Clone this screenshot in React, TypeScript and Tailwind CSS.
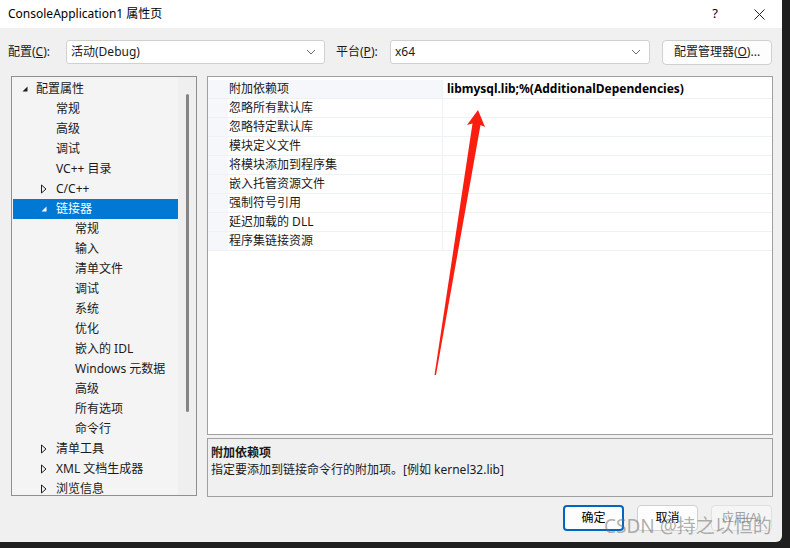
import React from "react";

const FONT = { fontFamily: '"Segoe UI", "Noto Sans", "Noto Sans CJK SC", sans-serif' };

type TreeItem = { label: string; level: number; arrow?: "open" | "closed"; selected?: boolean };

const tree: TreeItem[] = [
  { label: "配置属性", level: 0, arrow: "open" },
  { label: "常规", level: 1 },
  { label: "高级", level: 1 },
  { label: "调试", level: 1 },
  { label: "VC++ 目录", level: 1 },
  { label: "C/C++", level: 1, arrow: "closed" },
  { label: "链接器", level: 1, arrow: "open", selected: true },
  { label: "常规", level: 2 },
  { label: "输入", level: 2 },
  { label: "清单文件", level: 2 },
  { label: "调试", level: 2 },
  { label: "系统", level: 2 },
  { label: "优化", level: 2 },
  { label: "嵌入的 IDL", level: 2 },
  { label: "Windows 元数据", level: 2 },
  { label: "高级", level: 2 },
  { label: "所有选项", level: 2 },
  { label: "命令行", level: 2 },
  { label: "清单工具", level: 1, arrow: "closed" },
  { label: "XML 文档生成器", level: 1, arrow: "closed" },
  { label: "浏览信息", level: 1, arrow: "closed" },
];

const props = [
  "附加依赖项",
  "忽略所有默认库",
  "忽略特定默认库",
  "模块定义文件",
  "将模块添加到程序集",
  "嵌入托管资源文件",
  "强制符号引用",
  "延迟加载的 DLL",
  "程序集链接资源",
];

function Chevron() {
  return (
    <svg width="10" height="6" viewBox="0 0 10 6" className="shrink-0">
      <path d="M1 1 L5 5 L9 1" fill="none" stroke="#6b6b6b" strokeWidth="1" />
    </svg>
  );
}

function Arrow({ kind, selected }: { kind: "open" | "closed"; selected?: boolean }) {
  const c = selected ? "#ffffff" : "#1e1e1e";
  if (kind === "open")
    return (
      <svg width="8" height="8" viewBox="0 0 8 8">
        <path d="M6.5 1.5 L6.5 6.5 L1.5 6.5 Z" fill={c} />
      </svg>
    );
  return (
    <svg width="8" height="10" viewBox="0 0 8 10">
      <path d="M1.5 1 L6 5 L1.5 9 Z" fill="none" stroke={c} strokeWidth="1" />
    </svg>
  );
}

export default function App() {
  return (
    <div className="w-[790px] h-[548px] bg-[#1f1f1f] relative overflow-hidden text-[12px] text-[#1a1a1a]" style={FONT}>
      <div className="w-[782px] h-[542px] bg-[#f0f0f0] flex flex-col rounded-br-[6px] overflow-hidden">
        {/* Title bar */}
        <div className="h-[28px] bg-white flex items-center pl-[8px] shrink-0">
          <span className="text-[12px] text-black">ConsoleApplication1 属性页</span>
          <span className="ml-auto mr-[36px] text-[13px] text-black">?</span>
          <svg width="11" height="11" viewBox="0 0 11 11" className="mr-[17px]">
            <path d="M0.5 0.5 L10.5 10.5 M10.5 0.5 L0.5 10.5" stroke="#222" strokeWidth="1" />
          </svg>
        </div>

        {/* Config row */}
        <div className="h-[48px] flex items-center pl-[8px] shrink-0">
          <span className="w-[58px]">
            配置(<span className="underline">C</span>):
          </span>
          <div className="w-[259px] h-[24px] bg-white border border-[#d0d0d0] rounded-[3px] flex items-center pl-[4px] pr-[8px]">
            <span className="flex-1">活动(Debug)</span>
            <Chevron />
          </div>
          <span className="ml-[11px] w-[54px]">
            平台(<span className="underline">P</span>):
          </span>
          <div className="w-[260px] h-[24px] bg-white border border-[#d0d0d0] rounded-[3px] flex items-center pl-[4px] pr-[8px]">
            <span className="flex-1">x64</span>
            <Chevron />
          </div>
          <div className="ml-[12px] w-[110px] h-[25px] bg-[#fdfdfd] border border-[#d0d0d0] rounded-[4px] flex items-center justify-center">
            配置管理器(<span className="underline">O</span>)...
          </div>
        </div>

        {/* Main */}
        <div className="flex pl-[11px] gap-[10px] h-[421px] shrink-0">
          {/* Tree */}
          <div className="w-[186px] h-[420px] border border-[#8f8f8f] bg-[#f4f4f4] flex overflow-hidden">
            <div className="flex-1 flex flex-col pt-[2px] pl-[1px]">
              {tree.map((t, i) => (
                <div
                  key={i}
                  className={
                    "h-[20px] flex items-center shrink-0 " + (t.selected ? "bg-[#0078d4] text-white" : "")
                  }
                >
                  <div
                    className={
                      t.level === 0
                        ? "w-[23px] pl-[8px] flex items-center"
                        : t.level === 1
                        ? "w-[43px] pl-[27px] flex items-center"
                        : "w-[62px]"
                    }
                  >
                    {t.arrow && <Arrow kind={t.arrow} selected={t.selected} />}
                  </div>
                  <span>{t.label}</span>
                </div>
              ))}
            </div>
            <div className="w-[18px] bg-[#efefef] flex justify-center pt-[17px]">
              <div className="w-[3px] h-[318px] bg-[#858585] rounded-full" />
            </div>
          </div>

          {/* Right side */}
          <div className="w-[566px] flex flex-col">
            <div className="h-[359px] border border-[#a0a0a0] bg-white flex flex-col pt-[3px]">
              {props.map((p, i) => (
                <div key={i} className="h-[19px] flex border-b border-[#eef2f6] shrink-0">
                  <div className="w-[20px] bg-[#f5f7fa] shrink-0" />
                  <div
                    className={
                      "w-[215px] pl-[1px] flex items-center border-r border-[#eef2f6] " +
                      (i === 0 ? "bg-[#f5f7fa]" : "")
                    }
                  >
                    {p}
                  </div>
                  <div className="flex-1 pl-[4px] flex items-center font-bold text-black">
                    {i === 0 ? "libmysql.lib;%(AdditionalDependencies)" : ""}
                  </div>
                </div>
              ))}
            </div>
            <div className="mt-[3px] h-[59px] border border-[#a0a0a0] bg-[#f0f0f0] px-[3px] pt-[5px] leading-[17px]">
              <div className="font-bold">附加依赖项</div>
              <div>指定要添加到链接命令行的附加项。[例如 kernel32.lib]</div>
            </div>
          </div>
        </div>

        {/* Buttons */}
        <div className="flex justify-end gap-[13px] pr-[10px] mt-[8px]">
          <div className="w-[61px] h-[26px] bg-[#fdfdfd] border-2 border-[#0067c0] rounded-[4px] flex items-center justify-center text-black">
            确定
          </div>
          <div className="w-[61px] h-[26px] bg-[#fdfdfd] border border-[#d0d0d0] rounded-[4px] flex items-center justify-center text-black">
            取消
          </div>
          <div className="w-[61px] h-[26px] bg-[#f5f5f5] border border-[#e0e0e0] rounded-[4px] flex items-center justify-center text-[#a0a0a0]">
            应用(A)
          </div>
        </div>
      </div>

      {/* Red arrow annotation */}
      <svg className="absolute left-0 top-0 pointer-events-none" width="790" height="548">
        <polygon
          points="478,110 485,127 480.5,125 436,375 434.5,375 472.5,123.5 467,125"
          fill="#fa1e10"
        />
      </svg>

      {/* Watermark */}
      <div
        className="absolute left-[604px] top-[512px] text-[19px] text-[rgba(110,110,110,0.55)] pointer-events-none whitespace-nowrap"
        style={{ fontFamily: '"Noto Sans", "Noto Sans CJK SC", sans-serif' }}
      >
        CSDN @持之以恒的
      </div>
    </div>
  );
}
